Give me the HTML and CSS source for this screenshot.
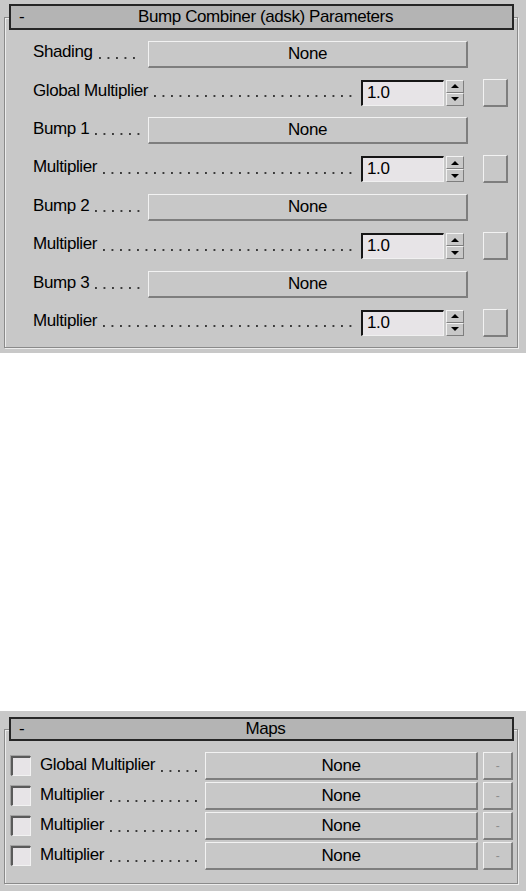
FILE: index.html
```html
<!DOCTYPE html>
<html lang="en">
<head>
<meta charset="utf-8">
<title>Bump Combiner (adsk) Parameters</title>
<link rel="stylesheet" href="styles.css">
</head>
<body>
<section class="panel panel-top">
  <div class="group">
    <div class="rollout-head"><span class="minus">-</span><span class="title">Bump Combiner (adsk) Parameters</span></div>
    <div class="rows rows-top">
      <div class="row btn-row"><span class="label">Shading</span><span class="lead"></span><button class="btn map">None</button></div>
      <div class="row spin-row"><span class="label">Global Multiplier</span><span class="lead"></span><div class="spinner"><span class="field">1.0</span><span class="arrows"><span class="arr up"></span><span class="arr down"></span></span></div><button class="btn sq"></button></div>
      <div class="row btn-row"><span class="label">Bump 1</span><span class="lead"></span><button class="btn map">None</button></div>
      <div class="row spin-row"><span class="label">Multiplier</span><span class="lead"></span><div class="spinner"><span class="field">1.0</span><span class="arrows"><span class="arr up"></span><span class="arr down"></span></span></div><button class="btn sq"></button></div>
      <div class="row btn-row"><span class="label">Bump 2</span><span class="lead"></span><button class="btn map">None</button></div>
      <div class="row spin-row"><span class="label">Multiplier</span><span class="lead"></span><div class="spinner"><span class="field">1.0</span><span class="arrows"><span class="arr up"></span><span class="arr down"></span></span></div><button class="btn sq"></button></div>
      <div class="row btn-row"><span class="label">Bump 3</span><span class="lead"></span><button class="btn map">None</button></div>
      <div class="row spin-row"><span class="label">Multiplier</span><span class="lead"></span><div class="spinner"><span class="field">1.0</span><span class="arrows"><span class="arr up"></span><span class="arr down"></span></span></div><button class="btn sq"></button></div>
    </div>
  </div>
</section>
<div class="gap"></div>
<section class="panel panel-maps">
  <div class="group">
    <div class="rollout-head head-maps"><span class="minus">-</span><span class="title">Maps</span></div>
    <div class="rows rows-maps">
      <div class="row map-row"><span class="check"></span><span class="label">Global Multiplier</span><span class="lead"></span><button class="btn wide">None</button><button class="btn dash">-</button></div>
      <div class="row map-row"><span class="check"></span><span class="label">Multiplier</span><span class="lead"></span><button class="btn wide">None</button><button class="btn dash">-</button></div>
      <div class="row map-row"><span class="check"></span><span class="label">Multiplier</span><span class="lead"></span><button class="btn wide">None</button><button class="btn dash">-</button></div>
      <div class="row map-row"><span class="check"></span><span class="label">Multiplier</span><span class="lead"></span><button class="btn wide">None</button><button class="btn dash">-</button></div>
    </div>
  </div>
</section>
</body>
</html>
```

FILE: styles.css
```css
* { box-sizing: border-box; }

body {
  margin: 0;
  width: 526px;
  background: #ffffff;
  font-family: "Liberation Sans", Arial, sans-serif;
  font-size: 17px;
  letter-spacing: -0.4px;
  color: #000;
}

.panel {
  background: #c8c8c8;
  padding-left: 4px;
}

.panel-top {
  height: 353px;
  padding-top: 17px;
}

.gap { height: 358px; }

.panel-maps {
  height: 180px;
  padding-top: 18px;
}

.group {
  width: 514px;
  border: 1px solid #8a8a8a;
  box-shadow: 1px 1px 0 #ececec, inset 1px 1px 0 #ececec;
}

.rollout-head {
  display: grid;
  align-items: center;
  height: 26px;
  margin: -14px 3px 0 4px;
  background: #b4b4b4;
  border: 2px solid #262626;
  line-height: 18px;
}

.head-maps {
  height: 24px;
  margin-top: -13px;
}

.rollout-head .minus,
.rollout-head .title {
  grid-area: 1 / 1;
}

.rollout-head .minus {
  justify-self: start;
  padding-left: 8px;
}

.rollout-head .title {
  justify-self: center;
  padding-left: 8px;
  margin-bottom: 1px;
}

.rows-top { padding: 5px 0 5px 0; }
.rows-maps { padding: 10px 0 12px 0; }

.row {
  display: flex;
  align-items: center;
  line-height: 18px;
}

.rows-top .row {
  height: 38.4px;
  padding-left: 28px;
}

.btn-row { padding-right: 49px; }
.spin-row { padding-right: 9px; }

.label {
  white-space: nowrap;
  height: 18px;
  margin-bottom: 4px;
}

.lead {
  flex: 1;
  height: 18px;
  margin-left: 6px;
  margin-right: 6px;
  margin-bottom: 4px;
  background-image: linear-gradient(90deg, #3a3a3a 0, #3a3a3a 1.5px, transparent 1.5px);
  background-size: 8.5px 1.5px;
  background-repeat: repeat-x;
  background-position: 0 13.5px;
}

.btn-row .lead { margin-right: 8px; }
.spin-row .lead { margin-right: 4px; }

.btn {
  display: flex;
  align-items: center;
  justify-content: center;
  padding: 0;
  margin: 0;
  font: inherit;
  letter-spacing: inherit;
  color: #000;
  background: #c8c8c8;
  border-style: solid;
  border-width: 1px 2px 2px 1px;
  border-color: #f2f2f2 #7e7e7e #7e7e7e #f2f2f2;
  line-height: 18px;
}

.map {
  width: 320px;
  height: 27px;
}

.spinner {
  display: flex;
  align-items: center;
  gap: 2px;
}

.field {
  width: 83px;
  height: 26px;
  background: #e7e4e7;
  border-style: solid;
  border-width: 2px 1px 1px 2px;
  border-color: #161616 #f0f0f0 #f0f0f0 #161616;
  padding-left: 4px;
  line-height: 21px;
}

.arrows {
  display: flex;
  flex-direction: column;
  width: 18px;
  height: 26px;
}

.arr {
  flex: 1;
  background: #c8c8c8;
  border-style: solid;
  border-width: 1px;
  border-color: #f2f2f2 #7e7e7e #7e7e7e #f2f2f2;
  display: flex;
  align-items: center;
  justify-content: center;
}

.arr::before {
  content: "";
  width: 0;
  height: 0;
  border-left: 4px solid transparent;
  border-right: 4px solid transparent;
}

.arr.up::before { border-bottom: 4px solid #000; }
.arr.down::before { border-top: 4px solid #000; }

.sq {
  width: 25px;
  height: 28px;
  margin-left: 19px;
}

/* Maps rollout */
.map-row {
  height: 30px;
  padding-left: 6px;
  padding-right: 4px;
}

.check {
  width: 20px;
  height: 20px;
  margin-right: 9px;
  background: #e7e4e7;
  border-style: solid;
  border-width: 2px 1px 1px 2px;
  border-color: #5a5a5a #f2f2f2 #f2f2f2 #5a5a5a;
  box-shadow: -1px -1px 0 #a2a2a2;
}

.map-row .label,
.map-row .lead {
  margin-bottom: 2px;
}

.map-row .lead {
  margin-left: 6px;
  margin-right: 5px;
}

.wide {
  width: 273px;
  height: 28px;
}

.dash {
  width: 30px;
  height: 28px;
  margin-left: 5px;
  color: #8c8c8c;
  font-size: 12px;
}
```
